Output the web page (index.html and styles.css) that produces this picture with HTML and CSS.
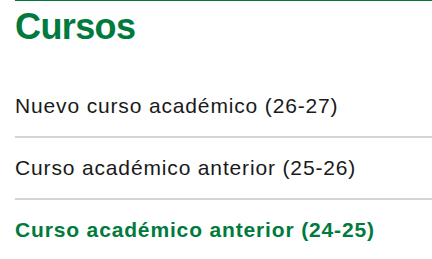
FILE: index.html
```html
<!DOCTYPE html>
<html lang="es">
<head>
    <meta charset="UTF-8">
    <meta name="viewport" content="width=device-width, initial-scale=1.0">
    <link rel="stylesheet" href="styles.css">
    <title>Cursos</title>
</head>
<body>
    <div class="cursos">
        <h2 class="cursos-title">Cursos</h2>
        <ul class="cursos-list">
            <li><a href="#">Nuevo curso académico (26-27)</a></li>
            <li><a href="#">Curso académico anterior (25-26)</a></li>
            <li class="active"><a href="#">Curso académico anterior (24-25)</a></li>
        </ul>
    </div>
</body>
</html>
```

FILE: styles.css
```css
body{
    margin: 0px;
    background: #ffffff;
    font-family: "Liberation Sans", Arial, sans-serif;
    color: #1a1a1a;
}
.cursos{
    margin-left: 15px;
    border-top: 1px solid #007a3d;
}
.cursos-title{
    margin: 0px;
    padding-top: 5px;
    font-size: 36px;
    line-height: 42px;
    letter-spacing: -0.6px;
    font-weight: bold;
    color: #007a3d;
}
.cursos-list{
    list-style: none;
    margin: 0px;
    padding: 0px;
    margin-top: 28px;
}
.cursos-list li{
    border-bottom: 2px solid #d4d4d8;
}
.cursos-list li:last-child{
    border-bottom: none;
}
.cursos-list a{
    display: block;
    padding: 18px 0px;
    font-size: 21px;
    line-height: 24px;
    letter-spacing: 0.85px;
    color: #1a1a1a;
    text-decoration: none;
}
.cursos-list .active a{
    color: #007a3d;
    font-weight: bold;
}
```
